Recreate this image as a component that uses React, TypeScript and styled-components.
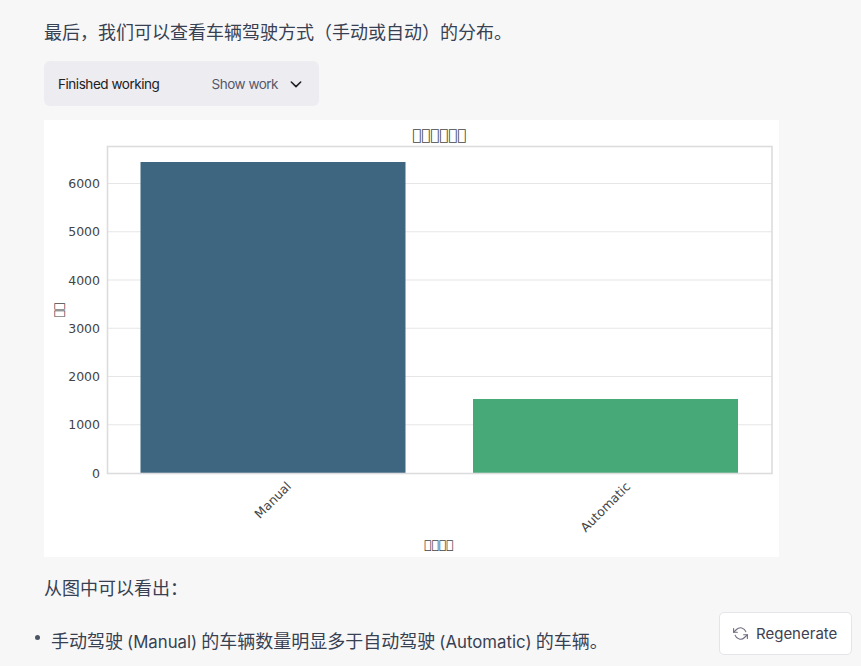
import React from "react";
import styled, { createGlobalStyle } from "styled-components";

const Global = createGlobalStyle`
  html, body { margin: 0; padding: 0; height: 100%; overflow: hidden; background: #f7f7f8; }
  * { box-sizing: border-box; }
`;

const Page = styled.div`
  position: relative;
  width: 861px;
  height: 666px;
  overflow: hidden;
  padding: 18px 0 0 44px;
  font-family: Inter, "Noto Sans CJK SC", sans-serif;
  color: #374151;
`;

const Paragraph = styled.p<{ $top?: number }>`
  margin: ${(p) => p.$top ?? 0}px 0 0;
  font-size: 18px;
  line-height: 30px;
  height: 30px;
  white-space: nowrap;
`;

const WorkChip = styled.div`
  margin-top: 13px;
  width: 275px;
  height: 45px;
  padding: 0 15px 0 14px;
  display: flex;
  align-items: center;
  justify-content: space-between;
  background: #ececf1;
  border-radius: 6px;
  font-size: 13.5px;
`;

const ChipLabel = styled.span`
  color: #202123;
  letter-spacing: -0.45px;
`;

const ChipAction = styled.span`
  display: flex;
  align-items: center;
  gap: 10px;
  color: #565869;
  letter-spacing: -0.5px;
`;

const ChartFrame = styled.div`
  margin-top: 14px;
  width: 735px;
  height: 437px;
  background: #fff;
`;

const ChartSvg = styled.svg`
  display: block;
  font-family: "DejaVu Sans", sans-serif;
  fill: #444;
`;

const BulletList = styled.ul`
  margin: 0;
  padding: 0;
`;

const Bullet = styled.li`
  margin: 23px 0 0 7px;
  font-size: 18px;
  line-height: 30px;
  white-space: nowrap;
  word-spacing: -1px;
  list-style: none;
  position: relative;
`;

const BulletDot = styled.span`
  position: absolute;
  left: -16px;
  top: 8px;
  width: 5px;
  height: 5px;
  border-radius: 50%;
  background: #4b5563;
`;

const Latin = styled.span`
  font-size: 16.8px;
`;

const RegenerateButton = styled.button`
  position: absolute;
  left: 719px;
  top: 612px;
  width: 133px;
  height: 43px;
  display: flex;
  align-items: center;
  gap: 8px;
  padding: 0 0 0 13px;
  background: #fff;
  border: 1px solid #e5e5e9;
  border-radius: 5px;
  font-family: Inter, sans-serif;
  font-size: 15px;
  color: #40414f;
`;

const ticks = [6000, 5000, 4000, 3000, 2000, 1000, 0];
const tickY = (v: number) => 353 - (v / 1000) * 48.25;
const TOFU = "\uE000";

function Chart() {
  return (
    <ChartSvg width="735" height="437" viewBox="0 0 735 437">
      {ticks.slice(0, -1).map((t) => (
        <line key={t} x1="63" x2="728" y1={tickY(t)} y2={tickY(t)} stroke="#e6e6e6" strokeWidth="1.1" />
      ))}
      <rect x="96.5" y="42" width="265" height="311" fill="#3f6680" />
      <rect x="429" y="279" width="265" height="74" fill="#47a878" />
      <rect x="63.5" y="26.5" width="664.5" height="327" fill="none" stroke="#dcdcdf" strokeWidth="1.6" />
      {ticks.map((t) => (
        <text key={t} x="56" y={tickY(t) + 4.5} fontSize="12.5" textAnchor="end">{t}</text>
      ))}
      <text x="395" y="19.5" fontSize="15" textAnchor="middle">{TOFU.repeat(6)}</text>
      <text x="395" y="429" fontSize="12.2" textAnchor="middle">{TOFU.repeat(4)}</text>
      <text transform="translate(19 190) rotate(-90)" fontSize="12.2" textAnchor="middle">{TOFU.repeat(2)}</text>
      <text transform="translate(248 367) rotate(-45)" fontSize="12.5" textAnchor="end">Manual</text>
      <text transform="translate(587 367.5) rotate(-45)" fontSize="12.5" textAnchor="end">Automatic</text>
    </ChartSvg>
  );
}

export default function App() {
  return (
    <Page>
      <Global />
      <Paragraph>最后，我们可以查看车辆驾驶方式（手动或自动）的分布。</Paragraph>
      <WorkChip>
        <ChipLabel>Finished working</ChipLabel>
        <ChipAction>
          Show work
          <svg width="16" height="16" viewBox="0 0 24 24" fill="none" stroke="#202123" strokeWidth="2.4" strokeLinecap="round" strokeLinejoin="round">
            <path d="M5 9l7 7 7-7" />
          </svg>
        </ChipAction>
      </WorkChip>
      <ChartFrame>
        <Chart />
      </ChartFrame>
      <Paragraph $top={17}>从图中可以看出：</Paragraph>
      <BulletList>
        <Bullet>
          <BulletDot />
          手动驾驶 <Latin>(Manual)</Latin> 的车辆数量明显多于自动驾驶 <Latin>(Automatic)</Latin> 的车辆。
        </Bullet>
      </BulletList>
      <RegenerateButton>
        <svg width="15" height="15" viewBox="0 0 24 24" fill="none" stroke="#6e6e80" strokeWidth="1.8" strokeLinecap="round" strokeLinejoin="round">
          <path d="M1 4v6h6" />
          <path d="M23 20v-6h-6" />
          <path d="M20.5 9A9 9 0 0 0 5.6 5.6L1 10m22 4-4.6 4.4A9 9 0 0 1 3.5 15" />
        </svg>
        Regenerate
      </RegenerateButton>
    </Page>
  );
}
